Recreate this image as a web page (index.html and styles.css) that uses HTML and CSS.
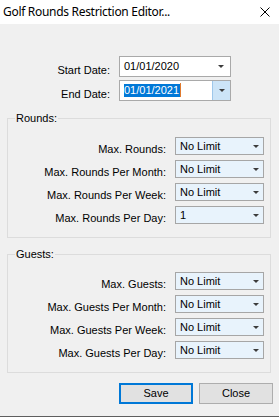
FILE: index.html
```html
<!doctype html>
<html lang="en">
<head>
  <meta charset="UTF-8" />
  <title>Golf Rounds Restriction Editor...</title>
  <link rel="stylesheet" href="styles.css">
</head>
<body>
  <main class="window">
    <header class="titlebar">
      <span class="title">Golf Rounds Restriction Editor...</span>
      <svg class="close" width="10" height="10" viewBox="0 0 10 10">
        <path d="M0.5 0.5 L9.5 9.5 M9.5 0.5 L0.5 9.5" stroke="#000" stroke-width="1" fill="none" />
      </svg>
    </header>

    <section class="dates">
      <label>Start Date:</label>
      <div class="date-box">
        <span class="date-text">01/01/2020</span>
        <span class="date-btn"><i class="arrow"></i></span>
      </div>
      <label>End Date:</label>
      <div class="date-box">
        <span class="date-text selected">01/01/2021</span>
        <span class="caret"></span>
        <span class="date-btn active"><i class="arrow"></i></span>
      </div>
    </section>

    <fieldset class="group">
      <legend>Rounds:</legend>
      <div class="rows">
        <label>Max. Rounds:</label>
        <div class="combo">No Limit<i class="arrow"></i></div>
        <label>Max. Rounds Per Month:</label>
        <div class="combo">No Limit<i class="arrow"></i></div>
        <label>Max. Rounds Per Week:</label>
        <div class="combo">No Limit<i class="arrow"></i></div>
        <label>Max. Rounds Per Day:</label>
        <div class="combo">1<i class="arrow"></i></div>
      </div>
    </fieldset>

    <fieldset class="group guests">
      <legend>Guests:</legend>
      <div class="rows">
        <label>Max. Guests:</label>
        <div class="combo">No Limit<i class="arrow"></i></div>
        <label>Max. Guests Per Month:</label>
        <div class="combo">No Limit<i class="arrow"></i></div>
        <label>Max. Guests Per Week:</label>
        <div class="combo">No Limit<i class="arrow"></i></div>
        <label>Max. Guests Per Day:</label>
        <div class="combo">No Limit<i class="arrow"></i></div>
      </div>
    </fieldset>

    <footer class="buttons">
      <button class="default">Save</button>
      <button>Close</button>
    </footer>
  </main>
</body>
</html>
```

FILE: styles.css
```css
* { box-sizing: border-box; }

body {
  margin: 0;
  width: 279px;
  height: 417px;
  overflow: hidden;
  background: #f0f0f0;
  font-family: "Liberation Sans", Arial, sans-serif;
  font-size: 11px;
  line-height: 13px;
  color: #000;
}

.window {
  height: 417px;
  border-bottom: 1px solid #5e5e5e;
}

.titlebar {
  height: 24px;
  background: #fff;
  display: flex;
  align-items: center;
  justify-content: space-between;
  padding: 0 9px 0 3px;
}

.title {
  font-family: "Noto Sans", sans-serif;
  font-size: 12px;
  line-height: 24px;
  letter-spacing: -0.3px;
}

.close { display: block; margin-top: -1px; }

/* dates */
.dates {
  display: grid;
  grid-template-columns: 110px 112px;
  grid-auto-rows: 21px;
  column-gap: 9px;
  row-gap: 3px;
  margin-top: 32px;
}

.dates label {
  text-align: right;
  padding-top: 8px;
}

.date-box {
  position: relative;
  display: flex;
  align-items: flex-start;
  background: #fff;
  border: 1px solid #a9a9a9;
  padding: 3px 0 0 4px;
}

.date-text { flex: 1; white-space: nowrap; }

.date-text.selected {
  flex: none;
  background: #0078d7;
  color: #fff;
  padding-right: 1px;
}

.caret {
  flex: 1;
  border-left: 1px solid #e07a2e;
  height: 14px;
  margin-top: -1px;
}

.date-btn {
  position: absolute;
  top: 0;
  right: 0;
  bottom: 0;
  width: 18px;
  display: flex;
  align-items: center;
  justify-content: center;
}

.date-btn.active {
  background: #cce4f7;
  border-left: 1px solid #9ec7ea;
}

.arrow {
  display: block;
  width: 0;
  height: 0;
  border-left: 3px solid transparent;
  border-right: 3px solid transparent;
  border-top: 3px solid #3c3c3c;
}

/* groups */
.group {
  margin: 11px 0 0 7px;
  width: 264px;
  border: 1px solid #dcdcdc;
  padding: 12px 6px 13px 0;
}

.group.guests { margin-top: 10px; padding-top: 11px; }

.group legend {
  margin-left: 7px;
  padding: 0 1px;
  line-height: 13px;
}

.rows {
  display: grid;
  grid-template-columns: 1fr 89px;
  grid-auto-rows: 18px;
  column-gap: 9px;
  row-gap: 5px;
}

.rows label {
  text-align: right;
  padding-top: 6px;
  white-space: nowrap;
}

.combo {
  display: flex;
  align-items: center;
  justify-content: space-between;
  background: #e8f3fc;
  border: 1px solid #a6a6a6;
  padding: 0 4px 1px 4px;
  line-height: 14px;
}

.combo .arrow { margin-top: 1px; }

/* buttons */
.buttons {
  display: flex;
  justify-content: flex-end;
  gap: 6px;
  padding-right: 6px;
  margin-top: 10px;
}

button {
  font: inherit;
  width: 74px;
  height: 21px;
  padding: 0;
  background: #e1e1e1;
  border: 1px solid #adadad;
  color: #000;
}

button.default {
  border: 2px solid #0078d7;
}
```
